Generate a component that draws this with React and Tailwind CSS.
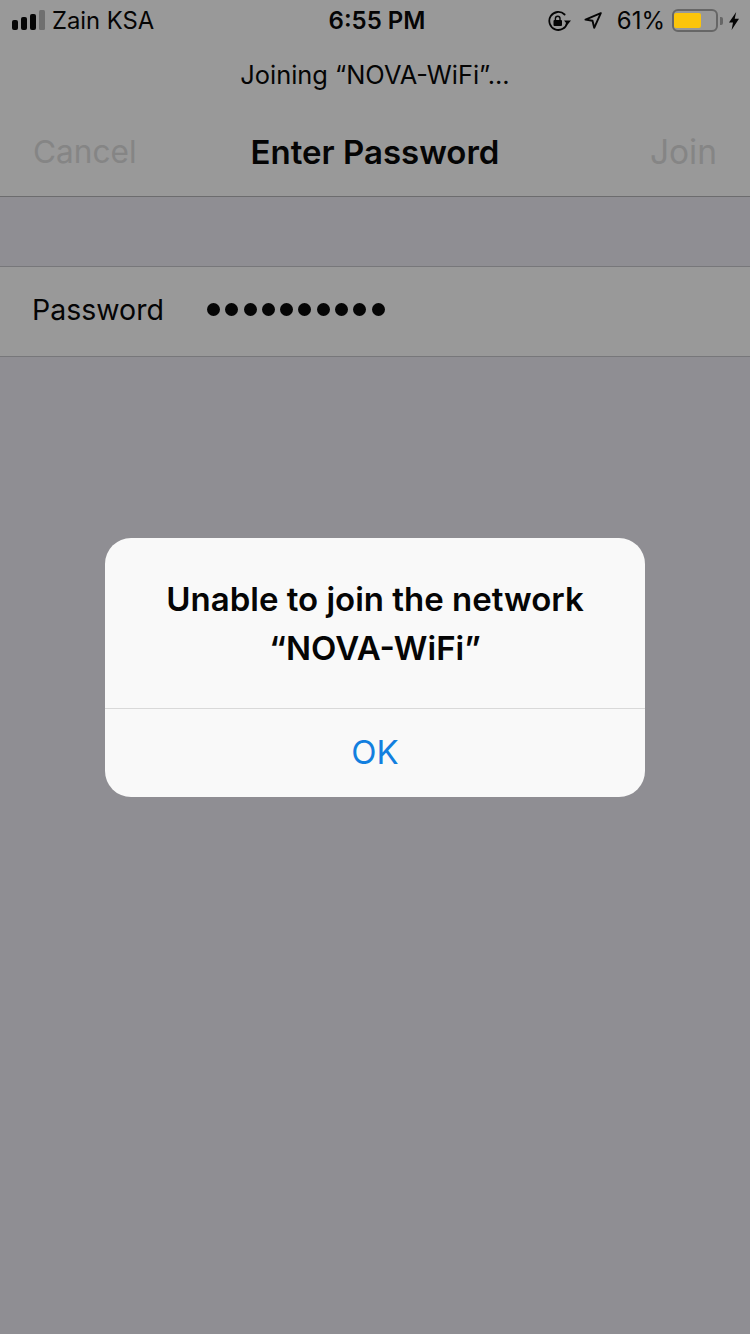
const font = { fontFamily: 'Inter, "Liberation Sans", sans-serif' };

function SignalBars() {
  return (
    <svg width="33" height="20" viewBox="0 0 33 20" className="shrink-0">
      <rect x="0" y="10" width="6" height="10" rx="2" fill="#050505" />
      <rect x="9" y="7" width="6" height="13" rx="2" fill="#050505" />
      <rect x="18" y="4" width="6" height="16" rx="2" fill="#050505" />
      <rect x="27" y="0" width="6" height="20" rx="1.5" fill="#6f6f6f" />
    </svg>
  );
}

function RotationLock() {
  return (
    <svg width="23" height="20" viewBox="0 0 23 20" fill="none" className="shrink-0">
      <path d="M19.2 11.5A9 9 0 1 1 16.6 3.5" stroke="#050505" strokeWidth="1.8" strokeLinecap="round" />
      <path d="M16 9.5h7l-3.5 4.2z" fill="#050505" />
      <rect x="5.5" y="9" width="8.5" height="6" rx="1" fill="#050505" />
      <path d="M7.4 9.5V7.6a2.3 2.3 0 0 1 4.6 0v1.9" stroke="#050505" strokeWidth="1.4" />
    </svg>
  );
}

function LocationArrow() {
  return (
    <svg width="18" height="17" viewBox="0 0 18 17" fill="none" className="shrink-0">
      <path d="M16.8 1.2 1.5 7.6l7 1.2 1.7 7z" stroke="#050505" strokeWidth="1.9" strokeLinejoin="round" />
    </svg>
  );
}

function Battery() {
  return (
    <div className="flex shrink-0 items-center">
      <div className="h-[23px] w-[46px] rounded-[6px] border-2 border-[#666] py-[2px]">
        <div className="h-full w-[27px] rounded-[2px] bg-[#fcc50a]" />
      </div>
      <div className="ml-[2px] h-[8px] w-[3px] rounded-r-[2px] bg-[#666]" />
    </div>
  );
}

function Bolt() {
  return (
    <svg width="10" height="18" viewBox="0 0 10 18" className="shrink-0">
      <path d="M7.2 0 0 10.4h4L2.6 18 10 6.8H5.7z" fill="#050505" />
    </svg>
  );
}

function StatusBar() {
  return (
    <div className="grid h-[41px] grid-cols-3 items-center text-[24px] text-[#050505]">
      <div className="flex items-center pl-[12px]">
        <SignalBars />
        <span className="ml-[7px] text-[23.8px] leading-none">Zain KSA</span>
      </div>
      <div className="pl-[4px] text-center font-semibold leading-none">6:55 PM</div>
      <div className="flex items-center justify-end pr-[11px]">
        <RotationLock />
        <div className="ml-[13px]"><LocationArrow /></div>
        <span className="ml-[15px] leading-none">61%</span>
        <div className="ml-[7px]"><Battery /></div>
        <div className="ml-[6px]"><Bolt /></div>
      </div>
    </div>
  );
}

export default function App() {
  const dots = Array.from({ length: 10 });
  return (
    <div className="relative flex min-h-[1334px] flex-col bg-[#8f8e93]" style={font}>
      <div className="h-[197px] border-b border-[#6c6c6e] bg-[#999999]">
        <StatusBar />
        <p className="mt-[19px] text-center text-[25.4px] leading-[30px] text-[#050505]">Joining “NOVA-WiFi”...</p>
        <div className="mt-[41px] grid grid-cols-[1fr_auto_1fr] items-center px-[33px] leading-[42px]">
          <span className="text-[31.6px] text-[#858585]">Cancel</span>
          <span className="text-[33px] font-semibold text-[#050505]">Enter Password</span>
          <span className="text-right text-[33.5px] text-[#858585]">Join</span>
        </div>
      </div>

      <div className="mt-[69px] flex h-[91px] items-center border-y border-[#77777a] bg-[#999999] pb-[3px] pl-[32px]">
        <span className="w-[175px] text-[28.5px] leading-none text-[#050505]">Password</span>
        <div className="mb-[1px] flex gap-[5.3px]">
          {dots.map((_, i) => (
            <span key={i} className="h-[13px] w-[13px] rounded-full bg-[#050505]" />
          ))}
        </div>
      </div>

      <div className="absolute inset-0 flex items-center justify-center">
        <div className="w-[540px] overflow-hidden rounded-[26px] bg-[#f9f9f9]">
          <div className="flex h-[170px] flex-col items-center justify-center pt-[2px] text-center text-[33px] font-semibold leading-[49px] text-[#050505]">
            <p>Unable to join the network</p>
            <p>“NOVA-WiFi”</p>
          </div>
          <div className="flex h-[89px] items-center justify-center border-t border-[#d9d9d9] pt-[1px] text-[33px] text-[#127fdf]">OK</div>
        </div>
      </div>
    </div>
  );
}
